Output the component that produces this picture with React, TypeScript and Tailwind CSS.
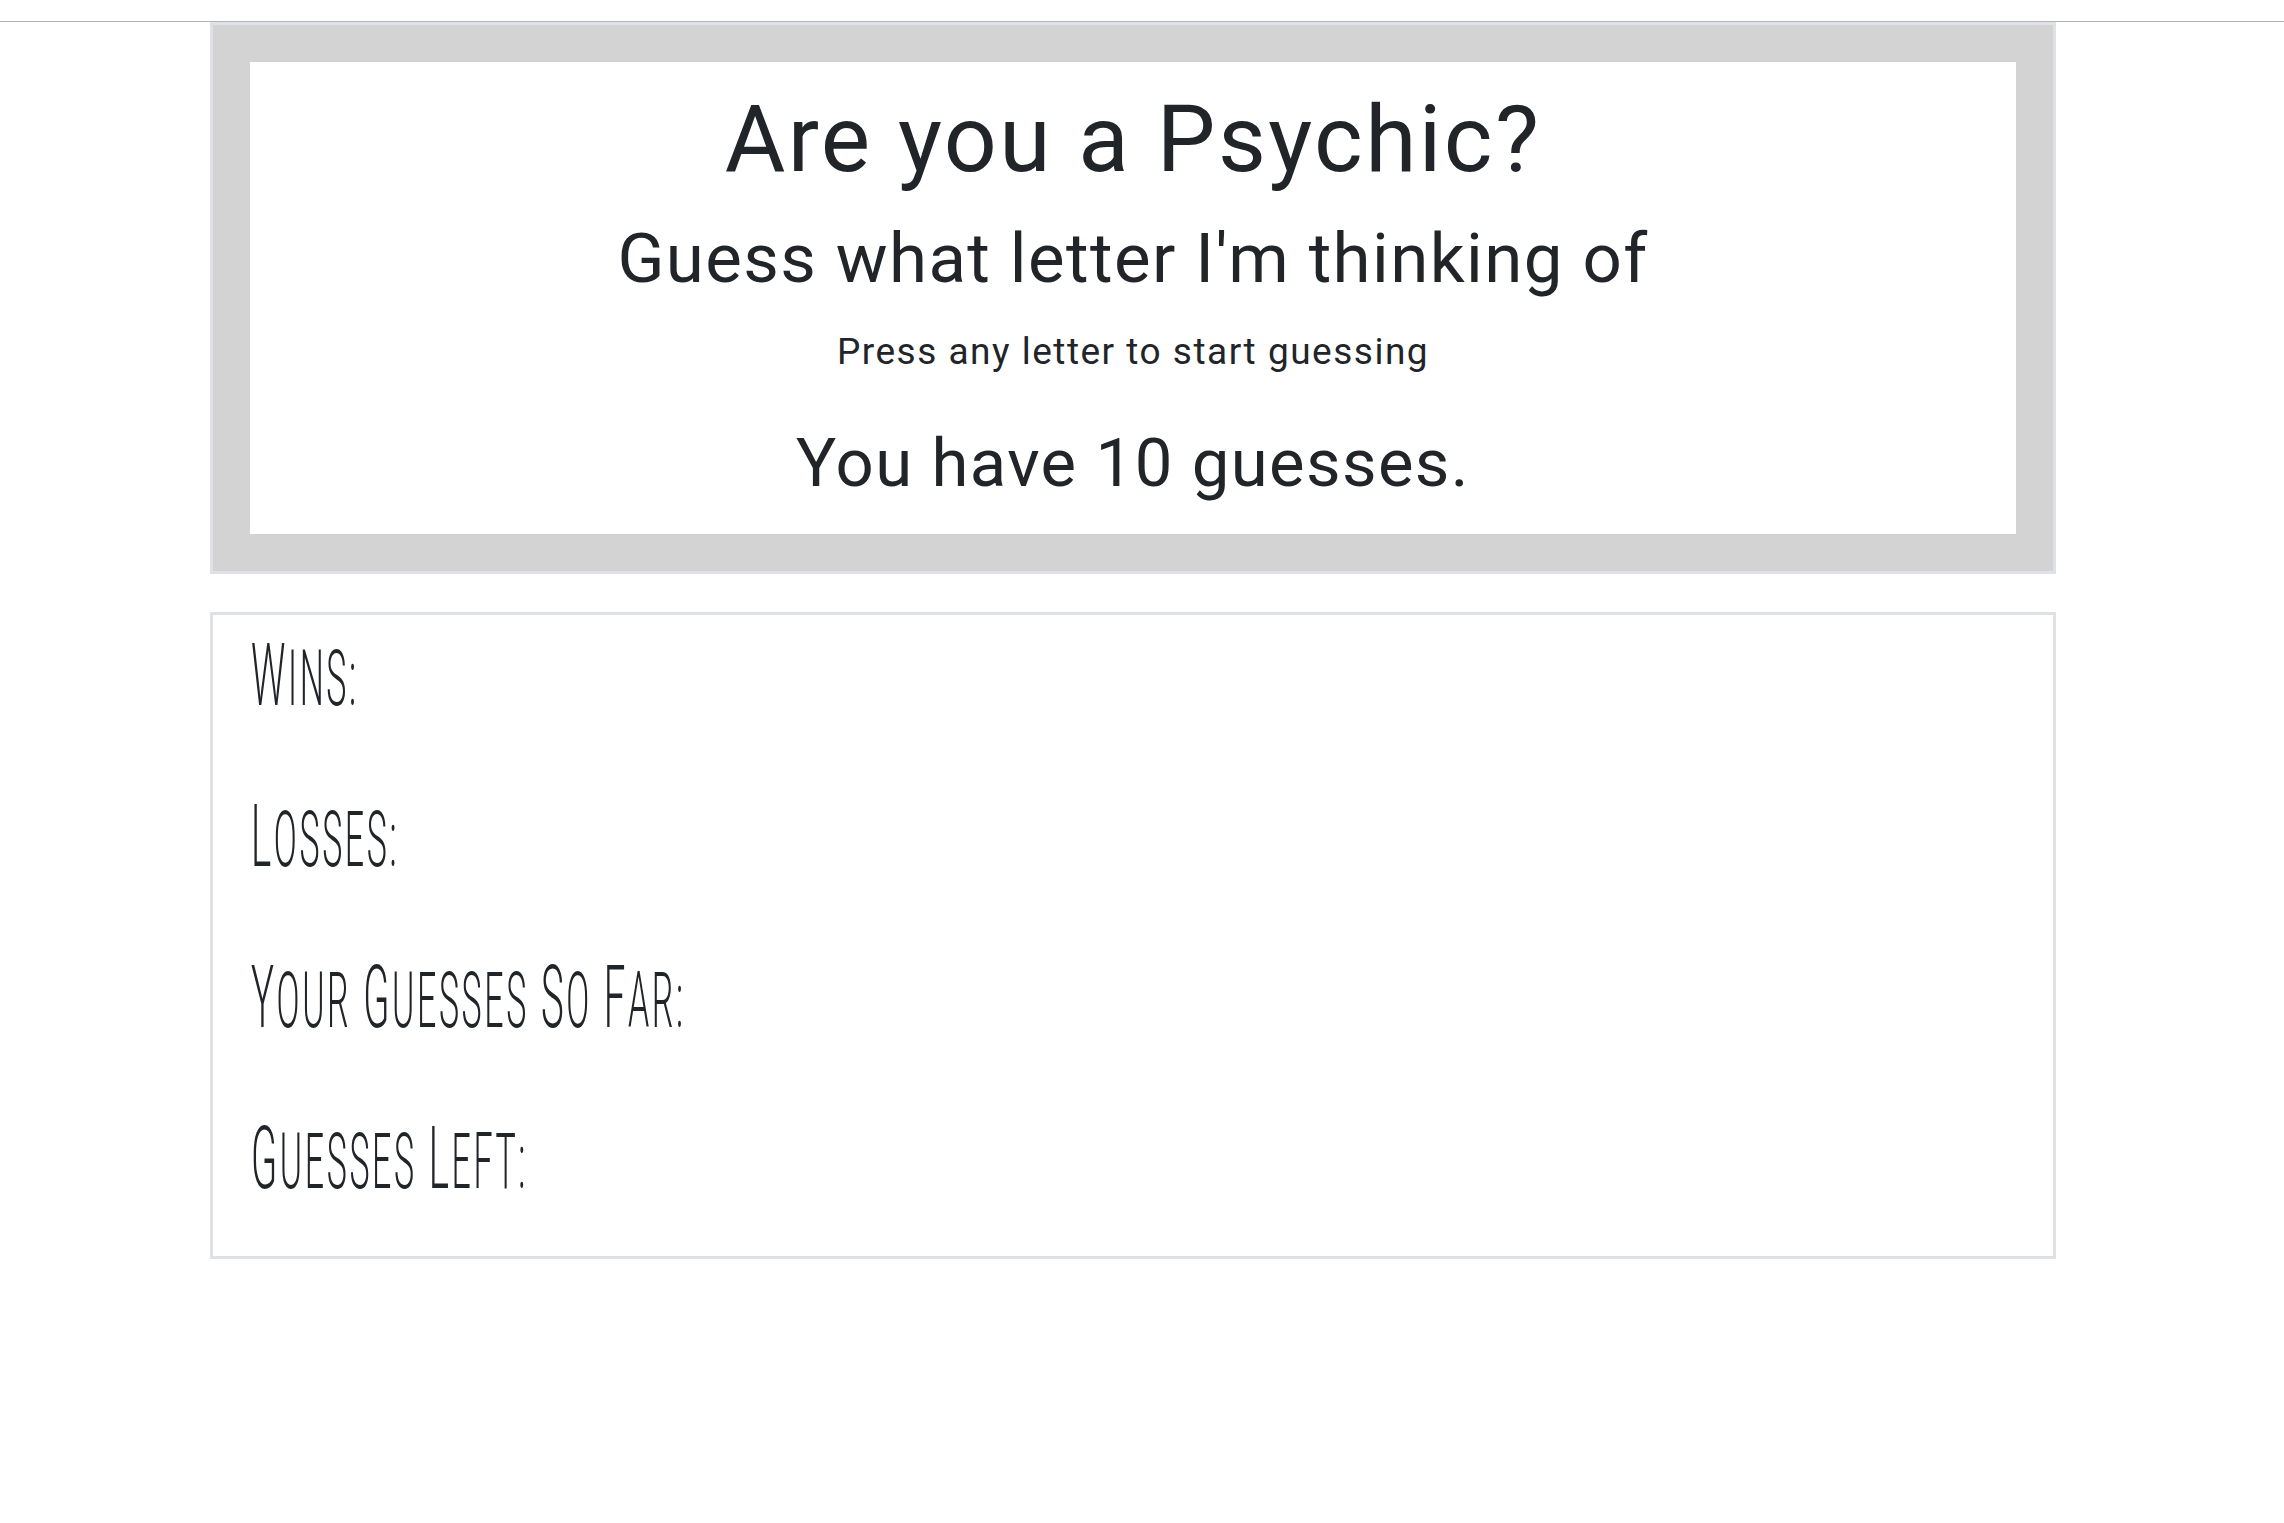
import React from "react";

const labels = [
  ["Wins:"],
  ["Losses:"],
  ["Your", "Guesses", "So", "Far:"],
  ["Guesses", "Left:"],
];

function SmallCapsWord({ word }: { word: string }) {
  return (
    <span>
      <span className="text-[87px]">{word[0].toUpperCase()}</span>
      <span className="text-[77px]">{word.slice(1).toUpperCase()}</span>
    </span>
  );
}

export default function App() {
  return (
    <div className="min-h-screen bg-white text-[#212529] font-['Roboto',sans-serif]">
      <div className="h-[22px] border-b border-[#b5b5b5]" />

      <div className="ml-[210px] w-[1846px]">
        {/* header card */}
        <div className="border-[3px] border-[#dee2e6] bg-[#d3d3d3] p-[37px]">
          <div className="flex flex-col items-center bg-white pt-[31px] pb-[37px] text-center leading-none">
            <h1 className="text-[93px] font-normal tracking-[2.4px]">Are you a Psychic?</h1>
            <h2 className="mt-[38px] text-[69px] font-normal tracking-[1.4px]">Guess what letter I'm thinking of</h2>
            <p className="mt-[40px] text-[37px] tracking-[1.5px]">Press any letter to start guessing</p>
            <p className="mt-[60px] text-[67px] tracking-[1.4px]">You have 10 guesses.</p>
          </div>
        </div>

        {/* score card */}
        <div className="mt-[38px] border-[3px] border-[#dee2e6] bg-white px-[38px] pt-[17px] pb-[54px]">
          <div className="flex flex-col gap-[74px] text-[87px] font-light leading-none tracking-[6px]">
            {labels.map((words, i) => (
              <div key={i} className="origin-left scale-x-[0.44] whitespace-nowrap">
                {words.map((w, j) => (
                  <React.Fragment key={j}>
                    {j > 0 && " "}
                    <SmallCapsWord word={w} />
                  </React.Fragment>
                ))}
              </div>
            ))}
          </div>
        </div>
      </div>
    </div>
  );
}
